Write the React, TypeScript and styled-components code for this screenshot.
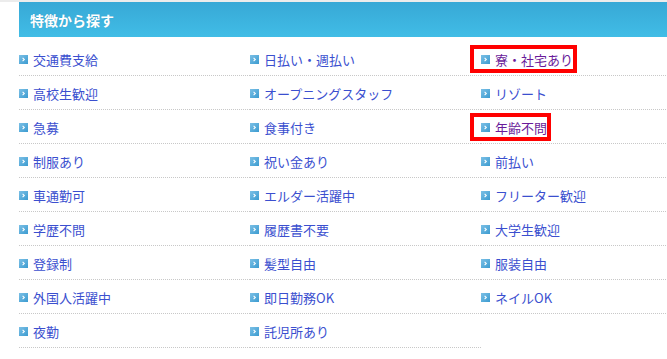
import React from "react";
import styled, { createGlobalStyle } from "styled-components";

const Global = createGlobalStyle`
  html, body { margin: 0; padding: 0; background: #fff; overflow: hidden; }
  body { font-family: "Noto Sans CJK JP", "Noto Sans", sans-serif; }
`;

const Page = styled.div`
  border-top: 2px solid #ececec;
  padding-left: 19px;
  width: 693px;
`;

const Header = styled.h2`
  margin: 0;
  height: 35px;
  display: flex;
  align-items: center;
  padding-left: 11px;
  background: linear-gradient(#37a8d6, #41bde6);
  color: #fff;
  font-size: 14px;
  font-weight: bold;
  text-shadow: 0 0 1px rgba(0, 0, 0, 0.15);
`;

const List = styled.ul`
  list-style: none;
  margin: 5px 0 0;
  padding: 0;
  display: grid;
  grid-template-columns: repeat(3, 231px);
`;

const Cell = styled.li`
  height: 31px;
  padding-top: 2px;
  border-bottom: 1px dotted #c8c8c8;
  display: flex;
  align-items: center;
`;

const Link = styled.a<{ $visited?: boolean; $marked?: boolean }>`
  position: relative;
  display: inline-flex;
  align-items: center;
  gap: 5px;
  font-size: 13px;
  line-height: 16px;
  color: ${(p) => (p.$visited ? "#6a1b9a" : "#3b4fcf")};
  text-decoration: none;
  cursor: pointer;
  &::after {
    content: "";
    display: ${(p) => (p.$marked ? "block" : "none")};
    position: absolute;
    left: -11px;
    right: -4px;
    top: -7px;
    bottom: -5px;
    border: 4px solid #ff0000;
    pointer-events: none;
  }
`;

const Arrow = () => (
  <svg width="9" height="9" viewBox="0 0 9 9" style={{ flex: "none" }}>
    <defs>
      <linearGradient id="ag" x1="0" y1="0" x2="1" y2="1">
        <stop offset="0" stopColor="#7cc0e6" />
        <stop offset="1" stopColor="#3b9bd0" />
      </linearGradient>
    </defs>
    <rect width="9" height="9" fill="url(#ag)" />
    <path d="M3.6 2.8 L5.3 4.5 L3.6 6.2" fill="none" stroke="#fff" strokeWidth="1.1" />
  </svg>
);

type Item = { label: string; visited?: boolean; marked?: boolean };

const items: Item[] = [
  { label: "交通費支給" },
  { label: "日払い・週払い" },
  { label: "寮・社宅あり", visited: true, marked: true },
  { label: "高校生歓迎" },
  { label: "オープニングスタッフ" },
  { label: "リゾート" },
  { label: "急募" },
  { label: "食事付き" },
  { label: "年齢不問", visited: true, marked: true },
  { label: "制服あり" },
  { label: "祝い金あり" },
  { label: "前払い" },
  { label: "車通勤可" },
  { label: "エルダー活躍中" },
  { label: "フリーター歓迎" },
  { label: "学歴不問" },
  { label: "履歴書不要" },
  { label: "大学生歓迎" },
  { label: "登録制" },
  { label: "髪型自由" },
  { label: "服装自由" },
  { label: "外国人活躍中" },
  { label: "即日勤務OK" },
  { label: "ネイルOK" },
  { label: "夜勤" },
  { label: "託児所あり" },
];

export default function App() {
  return (
    <>
      <Global />
      <Page>
        <Header>特徴から探す</Header>
        <List>
          {items.map((it) => (
            <Cell key={it.label}>
              <Link $visited={it.visited} $marked={it.marked}>
                <Arrow />
                {it.label}
              </Link>
            </Cell>
          ))}
        </List>
      </Page>
    </>
  );
}
